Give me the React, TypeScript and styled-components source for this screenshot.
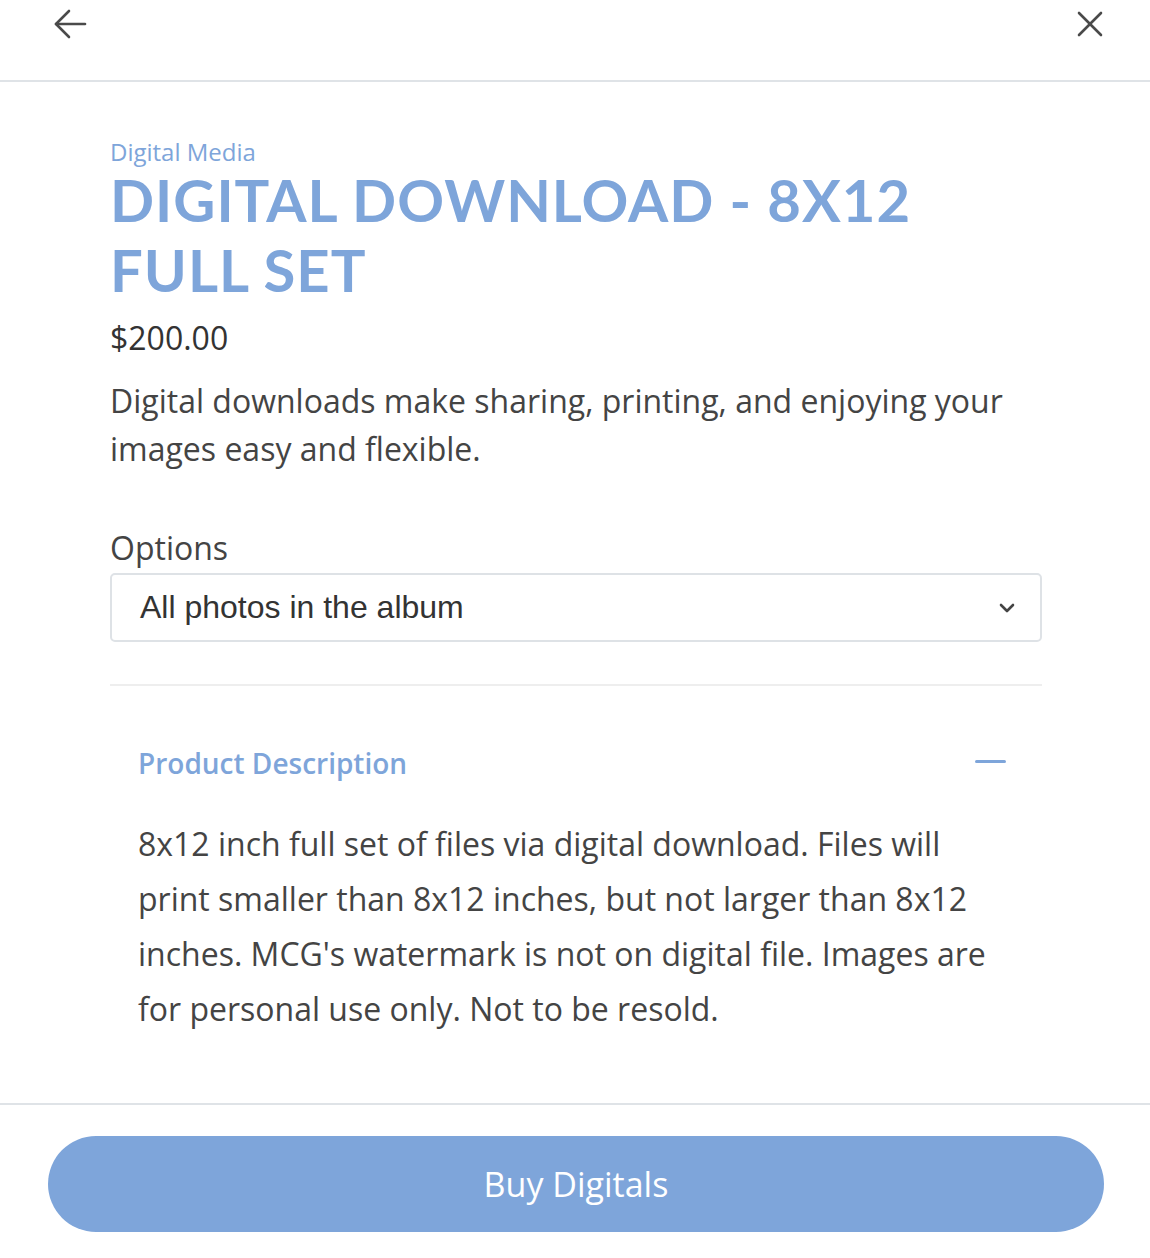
import React from "react";
import styled, { createGlobalStyle } from "styled-components";

const GlobalStyle = createGlobalStyle`
  html, body { margin: 0; padding: 0; background: #ffffff; }
  body { font-family: "Open Sans", "Liberation Sans", sans-serif; color: #444; }
  * { box-sizing: border-box; }
`;

const BLUE = "#7ea5da";

const Page = styled.div`
  width: 1150px;
  min-height: 1258px;
  display: flex;
  flex-direction: column;
  background: #fff;
`;

const Header = styled.header`
  height: 82px;
  border-bottom: 2px solid #dfe3e7;
  display: flex;
  justify-content: space-between;
  align-items: flex-start;
  padding: 8px 44px 0 53px;
`;

const IconButton = styled.button`
  background: none;
  border: none;
  padding: 0;
  margin: 0;
  display: flex;
  color: #4a4a4a;
  cursor: pointer;
`;

const Main = styled.main`
  padding: 57px 108px 0 110px;
  display: flex;
  flex-direction: column;
`;

const Category = styled.div`
  font-size: 24px;
  line-height: 26px;
  color: ${BLUE};
`;

const Title = styled.h1`
  margin: 0;
  font-family: Lato, "Open Sans", sans-serif;
  font-weight: 700;
  font-size: 58px;
  line-height: 70px;
  letter-spacing: 1px;
  color: ${BLUE};
  text-transform: uppercase;
`;

const Price = styled.div`
  margin-top: 13px;
  font-size: 32px;
  line-height: 40px;
  color: #333;
`;

const Lead = styled.p`
  margin: 19px 0 0;
  font-size: 32px;
  line-height: 48px;
  color: #444;
`;

const FieldLabel = styled.label`
  display: block;
  margin-top: 55px;
  font-size: 32px;
  line-height: 40px;
  color: #444;
`;

const Select = styled.div`
  margin-top: 5px;
  height: 69px;
  border: 2px solid #dee2e6;
  border-radius: 5px;
  display: flex;
  align-items: center;
  justify-content: space-between;
  padding: 0 24px 0 28px;
  font-family: "Liberation Sans", Arial, sans-serif;
  font-size: 32px;
  color: #333;
`;

const Divider = styled.hr`
  margin: 42px 0 0;
  border: none;
  border-top: 2px solid #eeeeee;
`;

const Accordion = styled.section`
  padding: 0 36px 0 28px;
  display: flex;
  flex-direction: column;
`;

const AccordionHead = styled.div`
  margin-top: 57px;
  display: flex;
  align-items: center;
  justify-content: space-between;
`;

const AccordionTitle = styled.h2`
  margin: 0;
  font-size: 28px;
  line-height: 40px;
  font-weight: 600;
  color: ${BLUE};
`;

const Minus = styled.span`
  width: 31px;
  height: 3px;
  border-radius: 2px;
  background: ${BLUE};
  margin-top: -3px;
`;

const Body = styled.p`
  margin: 33px 0 0;
  font-size: 32px;
  line-height: 55px;
  color: #444;
`;

const Footer = styled.footer`
  margin-top: 67px;
  border-top: 2px solid #dfe3e7;
  padding: 31px 46px 25px 48px;
`;

const BuyButton = styled.button`
  width: 100%;
  height: 96px;
  border: none;
  border-radius: 48px;
  background: ${BLUE};
  color: #fff;
  font-family: "Open Sans", sans-serif;
  font-size: 34px;
  cursor: pointer;
`;

export default function App() {
  return (
    <Page>
      <GlobalStyle />
      <Header>
        <IconButton aria-label="Back">
          <svg width="36" height="34" viewBox="0 0 36 34" fill="none" stroke="currentColor" strokeWidth="2.6" strokeLinecap="round" strokeLinejoin="round">
            <path d="M16 3 L3 16 L16 29" />
            <path d="M3 16 H32" />
          </svg>
        </IconButton>
        <IconButton aria-label="Close">
          <svg width="30" height="32" viewBox="0 0 30 32" fill="none" stroke="currentColor" strokeWidth="2.6" strokeLinecap="round">
            <path d="M3 5 L25 27" />
            <path d="M25 5 L3 27" />
          </svg>
        </IconButton>
      </Header>
      <Main>
        <Category>Digital Media</Category>
        <Title>Digital Download - 8x12 Full Set</Title>
        <Price>$200.00</Price>
        <Lead>Digital downloads make sharing, printing, and enjoying your images easy and flexible.</Lead>
        <FieldLabel>Options</FieldLabel>
        <Select>
          <span>All photos in the album</span>
          <svg width="18" height="12" viewBox="0 0 18 12" fill="none" stroke="#444" strokeWidth="2.6" strokeLinecap="round" strokeLinejoin="round">
            <path d="M3 3 L9 9 L15 3" />
          </svg>
        </Select>
        <Divider />
        <Accordion>
          <AccordionHead>
            <AccordionTitle>Product Description</AccordionTitle>
            <Minus />
          </AccordionHead>
          <Body>
            8x12 inch full set of files via digital download. Files will print smaller than 8x12 inches, but not larger than 8x12 inches. MCG's watermark is not on digital file. Images are for personal use only. Not to be resold.
          </Body>
        </Accordion>
      </Main>
      <Footer>
        <BuyButton>Buy Digitals</BuyButton>
      </Footer>
    </Page>
  );
}
